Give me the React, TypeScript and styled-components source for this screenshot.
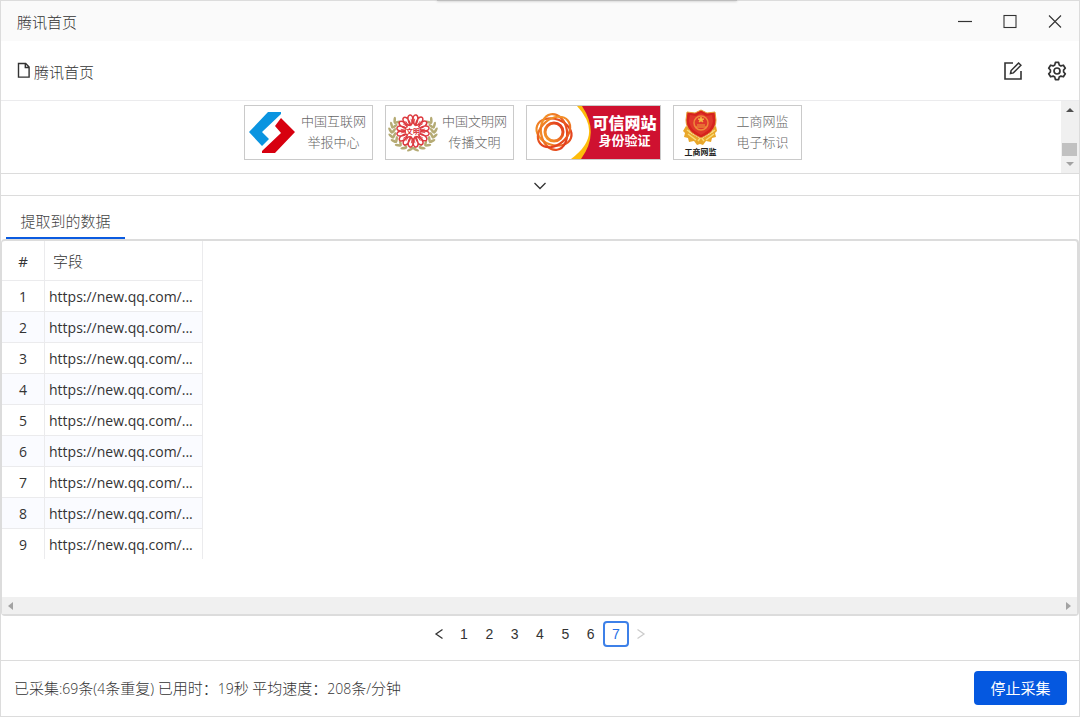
import React, { useState } from 'react';
import styled, { createGlobalStyle, css } from 'styled-components';

const line = '#dcdcdc';
const softLine = '#ebebed';

const GlobalStyle = createGlobalStyle`
  *, *::before, *::after { box-sizing: border-box; }
  body {
    margin: 0;
    background: #fff;
    color: #333;
    font: 15px/20px "Open Sans", "Noto Sans CJK SC", sans-serif;
  }
  button { font: inherit; color: inherit; border: 0; background: none; padding: 0; cursor: pointer; }
  svg { display: block; }
`;

const Window = styled.main`
  position: relative;
  display: flex;
  flex-direction: column;
  min-height: 100vh;
  border: 1px solid ${line};
`;

const DockShadow = styled.div`
  position: absolute;
  top: -1px;
  left: 50%;
  width: 300px;
  height: 2px;
  margin-left: -103px;
  background: #bdbdbd;
  box-shadow: 0 0 3px #b4b4b4;
`;

const ShadowClip = styled.div`
  position: absolute;
  inset: -1px 0 auto;
  height: 6px;
  overflow: hidden;
`;

const TitleBar = styled.header`
  display: flex;
  align-items: center;
  justify-content: space-between;
  height: 40px;
  padding: 2px 16px 0;
  background: #fafafa;
`;

const PageTitle = styled.h1`
  margin: 0;
  font-size: 15px;
  font-weight: 300;
`;

const IconRow = styled.div<{ $gap: number }>`
  display: flex;
  align-items: center;
  gap: ${(p) => p.$gap}px;
`;

const Toolbar = styled.div`
  display: flex;
  align-items: center;
  justify-content: space-between;
  height: 60px;
  padding: 0 12px 0 16px;
  border-bottom: 1px solid ${softLine};
`;

const PageName = styled.div`
  display: flex;
  align-items: center;
  gap: 3px;
  padding-top: 2px;
  font-weight: 300;
`;

const Preview = styled.section`
  display: flex;
  height: 73px;
  border-bottom: 1px solid ${line};
`;

const BadgeList = styled.div`
  display: flex;
  flex: 1;
  justify-content: center;
  align-items: flex-start;
  gap: 12px;
  padding: 4px 17px 0 0;
`;

const Badge = styled.a<{ $red?: boolean }>`
  display: flex;
  align-items: center;
  width: ${(p) => (p.$red ? 135 : 129)}px;
  height: 55px;
  border: 1px solid #cacaca;
  color: #666;
  text-decoration: none;
  ${(p) => p.$red && css`
    color: #fff;
    background: #cf1130;
  `}
`;

const Emblem = styled.span`
  flex: none;
  width: 54px;
`;

const BadgeText = styled.span`
  flex: 1;
  padding: 0 3px 4px 0;
  font: 300 13px/21px "Noto Sans CJK SC", sans-serif;
  text-align: center;
  white-space: nowrap;
`;

const TrustText = styled.span`
  display: flex;
  flex: 1;
  flex-direction: column;
  align-items: center;
  padding: 0 2px 2px 0;
  font: 700 13px/16px "Liberation Sans", "Noto Sans CJK SC", sans-serif;
  white-space: nowrap;
`;

const TrustTitle = styled.strong`
  font-size: 16px;
  line-height: 19px;
`;

const Seal = styled.span`
  display: flex;
  flex: none;
  flex-direction: column;
  align-items: center;
  width: 54px;
  color: #222;
  font: 700 8px/10px "Noto Sans CJK SC", sans-serif;
`;

const VerticalScroll = styled.div`
  display: flex;
  flex-direction: column;
  align-items: center;
  width: 18px;
  padding: 7px 1px 7px 0;
  background: #f0f0f0;
`;

const Thumb = styled.div`
  width: 15px;
  height: 13px;
  margin: auto 0 6px;
  background: #c1c1c1;
`;

const Arrow = styled.i<{ $dir: 'up' | 'down' | 'left' | 'right' }>`
  width: 0;
  height: 0;
  border: 4px solid transparent;
  ${(p) => p.$dir === 'up' && css`border-top: 0; border-bottom-color: #505050;`}
  ${(p) => p.$dir === 'down' && css`border-bottom: 0; border-top-color: #a3a3a3;`}
  ${(p) => p.$dir === 'left' && css`border-left: 0; border-right: 5px solid #a3a3a3;`}
  ${(p) => p.$dir === 'right' && css`border-right: 0; border-left: 5px solid #a3a3a3;`}
`;

const Collapse = styled.button`
  display: flex;
  align-items: center;
  justify-content: center;
  height: 22px;
  padding-top: 2px;
  border-bottom: 1px solid ${line};
`;

const Tabs = styled.div`
  display: flex;
  height: 43px;
  padding-left: 5px;
`;

const Tab = styled.button`
  width: 119px;
  padding: 8px 0 0;
  border-bottom: 2px solid #0b5be0;
  color: #444;
  font-weight: 300;
`;

const DataPanel = styled.section`
  display: flex;
  flex: 1;
  flex-direction: column;
  border: 2px solid ${line};
  border-left-width: 1px;
  border-radius: 4px;
`;

const DataTable = styled.table`
  width: 201px;
  border-collapse: separate;
  border-spacing: 0;
  table-layout: fixed;
`;

const Cell = styled.td<{ $index?: boolean }>`
  width: ${(p) => (p.$index ? 43 : 158)}px;
  height: 31px;
  padding: ${(p) => (p.$index ? '1px 0 0' : '1px 0 0 4px')};
  border-right: 1px solid ${softLine};
  border-bottom: 1px solid ${softLine};
  text-align: ${(p) => (p.$index ? 'center' : 'left')};
  font-size: 14px;
  font-weight: 400;
  white-space: nowrap;
  tr:nth-child(even) > & { background: #fafbff; }
  tbody tr:last-child > & {
    height: 30px;
    border-bottom: 0;
  }
`;

const HeadCell = styled(Cell)`
  && {
    height: 40px;
    padding: 0 0 0 ${(p) => (p.$index ? 0 : 8)}px;
    font-size: 15px;
    font-weight: ${(p) => (p.$index ? 400 : 300)};
  }
`;

const HorizontalScroll = styled.div`
  display: flex;
  align-items: center;
  justify-content: space-between;
  height: 17px;
  margin-top: auto;
  padding: 0 6px;
  background: #f0f0f0;
`;

const Pager = styled.nav`
  display: grid;
  grid-template-columns: repeat(9, 1fr);
  align-self: center;
  width: 228px;
  padding: 5px 0 13px;
  font: 14px/20px "Liberation Sans", Arial, sans-serif;
`;

const PageButton = styled.button<{ $active?: boolean }>`
  display: flex;
  align-items: center;
  justify-content: center;
  height: 26px;
  border-radius: 4px;
  ${(p) => p.$active && css`
    border: 2px solid #3d80e8;
    color: #2570e6;
  `}
  &:disabled { color: #ccc; }
`;

const Footer = styled.footer`
  display: flex;
  align-items: center;
  justify-content: space-between;
  height: 56px;
  padding: 0 12px 2px 13px;
  border-top: 1px solid ${line};
`;

const Status = styled.p`
  margin: 0;
  padding-top: 2px;
  font-weight: 300;
`;

const Count = styled.span`
  font-size: 14px;
`;

const StopButton = styled.button`
  width: 93px;
  height: 34px;
  padding-top: 1px;
  border-radius: 4px;
  background: #0558e0;
  color: #fff;
`;

const stroke = { fill: 'none', stroke: 'currentColor' } as const;

const petals = [0, 45, 90, 135, 180, 225, 270, 315];
const leaves = [0, 1, 2, 3, 4, 5, 6, 7];

const ReportLogo = () => (
  <svg width="54" height="53" viewBox="0 0 54 53">
    <path d="M23 6h13v2L17 26l7 7-7 7L4 26z" fill="#0a94e0" />
    <path d="M36 12l14 14-20 21H17v-2l19-18-6-7z" fill="#d7000f" />
  </svg>
);

const Leaves = () => (
  <g fill="#b5ab74">
    {leaves.map((n) => {
      const turn = 100 + n * 17;
      const a = turn * (Math.PI / 180);
      const x = 27 + Math.cos(a) * 21;
      const y = 25 + Math.sin(a) * 17;
      return (
        <g key={n} transform={`translate(${x} ${y}) rotate(${turn})`}>
          <ellipse cx="-2" cy="0" rx="1.3" ry="3.4" transform="rotate(35)" />
          <ellipse cx="2" cy="0" rx="1.3" ry="3.4" transform="rotate(-35)" />
        </g>
      );
    })}
  </g>
);

const CivilLogo = () => (
  <svg width="54" height="53" viewBox="0 0 54 53">
    <Leaves />
    <g transform="translate(54 0) scale(-1 1)"><Leaves /></g>
    <circle cx="27" cy="25" r="16" fill="#fff" />
    <g fill="none" stroke="#dd3a3f">
      {petals.map((r) => (
        <g key={r} transform={`rotate(${r + 22} 27 25)`}>
          <path d="M27 19C21 16 21 9 24 9s4 5 3 10c-1-5 0-10 3-10s3 7-3 10" strokeWidth="1.5" />
          <path d="M25 18l-1-5M29 18l1-5" strokeWidth=".8" />
        </g>
      ))}
    </g>
    <rect x="20" y="21" width="14" height="8" rx="3" fill="#fff" />
    <text x="27" y="28" textAnchor="middle" fontSize="7" fontWeight="700" fill="#d8262c" fontFamily="Noto Sans CJK SC, sans-serif">文明</text>
  </svg>
);

const TrustLogo = () => (
  <svg width="65" height="53" viewBox="0 0 65 53">
    <defs>
      <linearGradient id="flame" x1="0" y1="1" x2="1" y2="0">
        <stop offset="0" stopColor="#f6a12a" />
        <stop offset="1" stopColor="#e02f1c" />
      </linearGradient>
    </defs>
    <path d="M49 0h6q18 27-1 53H44z" fill="#fdbc0b" />
    <path d="M0 0h50q27 29-6 53H0z" fill="#fff" />
    <g fill="none" stroke="url(#flame)" strokeWidth="2.2">
      {[20, 80, 140].map((r) => (
        <ellipse key={r} cx="27" cy="26" rx="18" ry="13" transform={`rotate(${r} 27 26)`} />
      ))}
      <circle cx="27" cy="26" r="9" strokeWidth="3" />
    </g>
  </svg>
);

const SealLogo = () => (
  <svg width="36" height="38" viewBox="0 0 36 38">
    <path d="M3 17l3 2 0 4 5 3 7 4 7-4 5-3 0-4 3-2 1 5-2 2 1 4-4 1-1 4-5-1-3 4-3-1-3 1-3-4-5 1-1-4-4-1 1-4-2-2z" fill="#e9a72a" />
    <path d="M5 25l8 6M31 25l-8 6M4 21l6 4M32 21l-6 4M15 32l3-4 3 4" stroke="#f8dc76" strokeWidth="1.5" fill="none" />
    <path d="M18 1l6 3 8-1 1 8c0 9-6 14-15 18C9 25 3 20 3 11l1-8 8 1z" fill="#d6231d" stroke="#e7a036" strokeWidth="1" />
    <path d="M18 4l5 3 6-1 1 6c-1 7-5 10-12 14C11 22 7 19 6 12l1-6 6 1z" fill="#df382b" />
    <circle cx="18" cy="14" r="7" fill="none" stroke="#ef8a3a" strokeWidth="1.5" />
    <path d="M18 8l1 2h2l-2 1 1 2-2-1-2 1 1-2-2-1h2zM14 16h8M13 18h10" fill="#f4bd43" stroke="#f4bd43" strokeWidth=".8" />
  </svg>
);

const rows = Array.from({ length: 9 }, (_, i) => ({ id: i + 1, url: 'https://new.qq.com/...' }));

export default function App() {
  const [page, setPage] = useState(7);
  return (
    <>
      <GlobalStyle />
      <Window>
        <TitleBar>
          <PageTitle>腾讯首页</PageTitle>
          <IconRow $gap={29}>
            <button aria-label="最小化">
              <svg width="16" height="16" {...stroke}><path d="M1 7.5h14" strokeWidth="1.2" /></svg>
            </button>
            <button aria-label="最大化">
              <svg width="16" height="16" {...stroke}><rect x="2" y="1.5" width="12" height="12" strokeWidth="1.1" /></svg>
            </button>
            <button aria-label="关闭">
              <svg width="16" height="16" {...stroke}><path d="M2 1.5l12 12M14 1.5l-12 12" strokeWidth="1.1" /></svg>
            </button>
          </IconRow>
        </TitleBar>
        <ShadowClip><DockShadow /></ShadowClip>

        <Toolbar>
          <PageName>
            <svg width="14" height="20" {...stroke} strokeWidth="1.4">
              <path d="M1.5 1.5h7.2l3.4 3.6v10H1.5zM8.3 1.5v4h4" />
            </svg>
            腾讯首页
          </PageName>
          <IconRow $gap={24}>
            <button aria-label="编辑">
              <svg width="20" height="20" {...stroke} strokeWidth="1.6">
                <path d="M10 2H2v16h16v-8" />
                <path d="M7.5 12.5l.6-3L15.6 2l2.3 2.3-7.5 7.6z" strokeWidth="1.5" />
              </svg>
            </button>
            <button aria-label="设置">
              <svg width="20" height="20" {...stroke} strokeWidth="1.7" strokeLinejoin="round">
                <path d="M8.4 1.4h3.2l.6 2.5 1.7 1 2.5-.7 1.9 3L16.6 9v2l1.7 1.8-1.9 3-2.5-.7-1.7 1-.6 2.5H8.4l-.6-2.5-1.7-1-2.5.7-1.9-3L3.4 11V9L1.7 7.2l1.9-3 2.5.7 1.7-1z" />
                <circle cx="10" cy="10" r="3" />
              </svg>
            </button>
          </IconRow>
        </Toolbar>

        <Preview>
          <BadgeList>
            <Badge href="#report">
              <Emblem><ReportLogo /></Emblem>
              <BadgeText>中国互联网<br />举报中心</BadgeText>
            </Badge>
            <Badge href="#civil">
              <Emblem><CivilLogo /></Emblem>
              <BadgeText>中国文明网<br />传播文明</BadgeText>
            </Badge>
            <Badge href="#trust" $red>
              <TrustLogo />
              <TrustText><TrustTitle>可信网站</TrustTitle>身份验证</TrustText>
            </Badge>
            <Badge href="#seal">
              <Seal><SealLogo />工商网监</Seal>
              <BadgeText>工商网监<br />电子标识</BadgeText>
            </Badge>
          </BadgeList>
          <VerticalScroll>
            <Arrow $dir="up" />
            <Thumb />
            <Arrow $dir="down" />
          </VerticalScroll>
        </Preview>

        <Collapse aria-label="收起">
          <svg width="14" height="10" {...stroke} strokeWidth="1.3"><path d="M1.5 2l5.5 5.5L12.5 2" /></svg>
        </Collapse>

        <Tabs role="tablist">
          <Tab role="tab" aria-selected="true">提取到的数据</Tab>
        </Tabs>

        <DataPanel>
          <DataTable>
            <thead>
              <tr>
                <HeadCell as="th" $index>#</HeadCell>
                <HeadCell as="th">字段</HeadCell>
              </tr>
            </thead>
            <tbody>
              {rows.map((row) => (
                <tr key={row.id}>
                  <Cell $index>{row.id}</Cell>
                  <Cell>{row.url}</Cell>
                </tr>
              ))}
            </tbody>
          </DataTable>
          <HorizontalScroll>
            <Arrow $dir="left" />
            <Arrow $dir="right" />
          </HorizontalScroll>
        </DataPanel>

        <Pager aria-label="分页">
          <PageButton aria-label="上一页" onClick={() => setPage(Math.max(1, page - 1))}>
            <svg width="10" height="12" {...stroke} strokeWidth="1.3"><path d="M8.5 1.5L2 6l6.5 4.5" /></svg>
          </PageButton>
          {[1, 2, 3, 4, 5, 6, 7].map((n) => (
            <PageButton key={n} $active={n === page} onClick={() => setPage(n)}>{n}</PageButton>
          ))}
          <PageButton aria-label="下一页" disabled={page === 7} onClick={() => setPage(page + 1)}>
            <svg width="10" height="12" {...stroke} strokeWidth="1.3"><path d="M1.5 1.5L8 6l-6.5 4.5" /></svg>
          </PageButton>
        </Pager>

        <Footer>
          <Status>
            已采集<Count>:69</Count>条<Count>(4</Count>条重复<Count>) </Count>
            已用时：<Count>19</Count>秒<Count> </Count>
            平均速度：<Count>208</Count>条<Count>/</Count>分钟
          </Status>
          <StopButton>停止采集</StopButton>
        </Footer>
      </Window>
    </>
  );
}
